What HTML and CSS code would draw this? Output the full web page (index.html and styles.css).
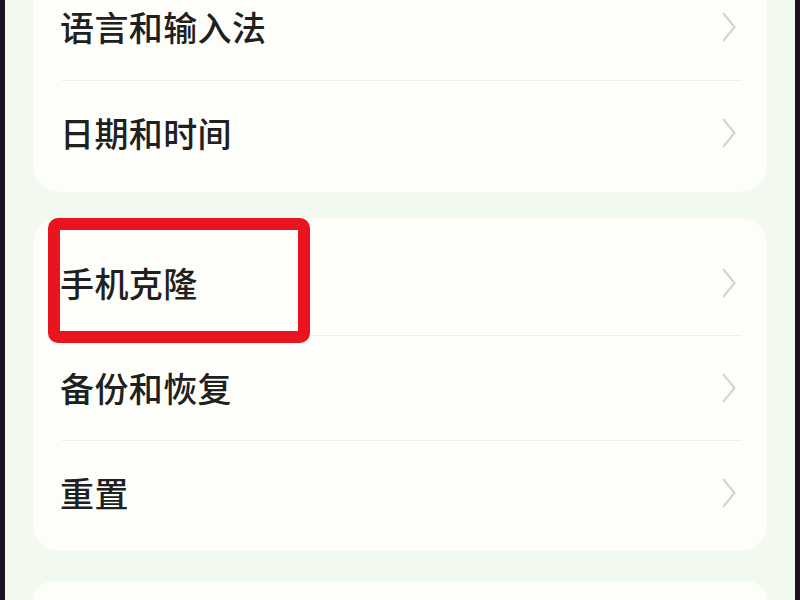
FILE: index.html
```html
<!DOCTYPE html>
<html lang="zh-CN">
<head>
<meta charset="utf-8">
<title>设置</title>
<link rel="stylesheet" href="styles.css">
</head>
<body>
<div class="frame">
  <div class="edge"></div>
  <main class="screen">
    <section class="card card-first">
      <div class="row"><span class="label">语言和输入法</span><svg class="chev" viewBox="0 0 14 30"><polyline points="1.5,1.5 12.5,15 1.5,28.5"/></svg></div>
      <div class="divider"></div>
      <div class="row"><span class="label">日期和时间</span><svg class="chev" viewBox="0 0 14 30"><polyline points="1.5,1.5 12.5,15 1.5,28.5"/></svg></div>
    </section>
    <section class="card card-second">
      <div class="row highlighted"><span class="label">手机克隆</span><svg class="chev" viewBox="0 0 14 30"><polyline points="1.5,1.5 12.5,15 1.5,28.5"/></svg><div class="mark"></div></div>
      <div class="divider"></div>
      <div class="row"><span class="label">备份和恢复</span><svg class="chev" viewBox="0 0 14 30"><polyline points="1.5,1.5 12.5,15 1.5,28.5"/></svg></div>
      <div class="divider"></div>
      <div class="row"><span class="label">重置</span><svg class="chev" viewBox="0 0 14 30"><polyline points="1.5,1.5 12.5,15 1.5,28.5"/></svg></div>
    </section>
    <section class="card card-third"></section>
  </main>
  <div class="edge"></div>
</div>
</body>
</html>
```

FILE: styles.css
```css
html, body {
  margin: 0;
  padding: 0;
  width: 800px;
  height: 600px;
  overflow: hidden;
  background: #f2f9ee;
}

.frame {
  display: flex;
  width: 800px;
  height: 600px;
  overflow: hidden;
}

.edge {
  width: 5px;
  flex: none;
  background: #1a1020;
}

.screen {
  flex: 1;
  display: flex;
  flex-direction: column;
  gap: 26px;
  padding: 0 28px 0 28px;
  background: #f2f9ee;
  font-family: "Noto Sans CJK SC", "Noto Sans", sans-serif;
  overflow: hidden;
}

.card {
  background: #fdfefa;
  border-radius: 26px;
  padding: 0 25px 0 27px;
  flex: none;
}

.card-first {
  margin-top: -26px;
  padding-bottom: 7px;
}

.card-first .row:first-child {
  height: 106px;
}

.card-second {
  padding-top: 13px;
  padding-bottom: 6px;
}

.card-third {
  margin-top: 4px;
  height: 20px;
  border-radius: 26px 26px 0 0;
}

.row {
  position: relative;
  height: 104px;
  display: flex;
  align-items: center;
  justify-content: space-between;
  padding-right: 6px;
}

.label {
  font-size: 34px;
  line-height: 1;
  font-weight: 500;
  color: #202020;
  letter-spacing: 0.4px;
}

.chev {
  width: 14px;
  height: 30px;
  margin-top: 0;
  fill: none;
  stroke: #d2d4cf;
  stroke-width: 2;
  stroke-linecap: round;
  stroke-linejoin: round;
}

.divider {
  height: 1px;
  margin-left: 2px;
  background: #eceee8;
}

.mark {
  position: absolute;
  left: -12px;
  top: -13px;
  width: 238px;
  height: 101px;
  border: 12px solid #ea1420;
  border-radius: 10px;
}
```
